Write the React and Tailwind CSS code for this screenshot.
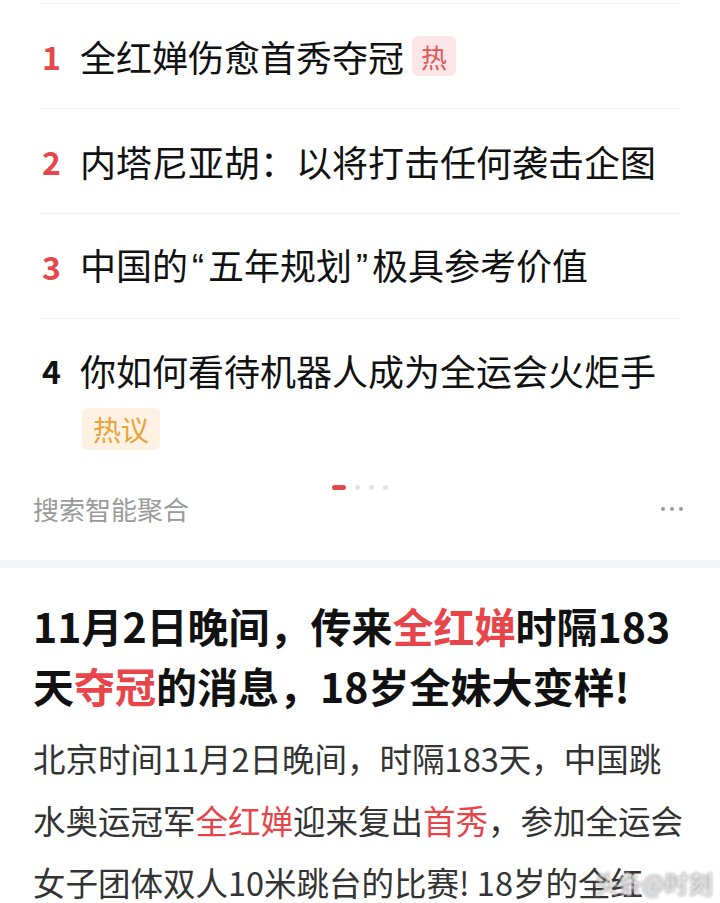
import React from "react";

const F = { fontFamily: '"Noto Sans CJK SC", "Noto Sans", sans-serif' };

function Row({ num, red, children, tag }) {
  return (
    <div className="flex h-[105px] items-center border-b border-[#f0f0f0]">
      <span className={`w-[40px] pl-[2px] text-[32px] font-semibold leading-none ${red ? "text-[#e5474a]" : "text-[#111]"}`}>{num}</span>
      <span className="text-[36px] leading-[50px] text-[#111] whitespace-nowrap">{children}</span>
      {tag}
    </div>
  );
}

const Q = ({ children }) => (
  <span className="mx-[4px]" style={{ fontFamily: '"Liberation Sans", sans-serif' }}>
    {children}
  </span>
);

export default function App() {
  return (
    <div className="relative w-[720px] h-[903px] overflow-hidden bg-white" style={F}>
      <div className="px-[40px]">
        <div className="h-[3px]" />
        <div className="h-px bg-[#f0f0f0]" />
        <Row
          num="1"
          red
          tag={
            <span className="ml-[8px] flex h-[40px] w-[44px] items-center justify-center rounded-[6px] bg-[#fbe5e6] text-[26px] text-[#e0575a]">
              热
            </span>
          }
        >
          全红婵伤愈首秀夺冠
        </Row>
        <Row num="2" red>
          内塔尼亚胡：以将打击任何袭击企图
        </Row>
        <Row num="3" red>
          中国的<Q>“</Q>五年规划<Q>”</Q>极具参考价值
        </Row>
        <div className="pt-[26px]">
          <div className="flex h-[50px] items-center">
            <span className="w-[40px] pl-[2px] text-[32px] font-semibold leading-none text-[#111]">4</span>
            <span className="text-[36px] leading-[50px] text-[#111] whitespace-nowrap">你如何看待机器人成为全运会火炬手</span>
          </div>
          <div className="ml-[42px] mt-[13px] flex h-[42px] w-[78px] items-center justify-center rounded-[6px] bg-[#fdf1e2] text-[28px] text-[#e9a23b]">
            热议
          </div>
        </div>
      </div>

      <div className="mt-[35px] flex items-center justify-center gap-[9px]">
        <span className="h-[5px] w-[14px] rounded-full bg-[#e5474a]" />
        <span className="h-[5px] w-[5px] rounded-full bg-[#e2e2e2]" />
        <span className="h-[5px] w-[5px] rounded-full bg-[#e2e2e2]" />
        <span className="h-[5px] w-[5px] rounded-full bg-[#e2e2e2]" />
      </div>

      <div className="flex h-[38px] items-center justify-between pl-[33px] pr-[37px]">
        <span className="text-[26px] leading-none text-[#9a9a9a]">搜索智能聚合</span>
        <span className="flex gap-[5px]">
          <span className="h-[4px] w-[4px] rounded-full bg-[#9a9a9a]" />
          <span className="h-[4px] w-[4px] rounded-full bg-[#9a9a9a]" />
          <span className="h-[4px] w-[4px] rounded-full bg-[#9a9a9a]" />
        </span>
      </div>

      <div className="mt-[32px] h-[8px] bg-[#f4f5f7]" />

      <div className="px-[33px] pt-[27px]">
        <div className="text-[41px] font-semibold leading-[60px] text-[#111] whitespace-nowrap">
          11月2日晚间，传来<span className="text-[#e8454a]">全红婵</span>时隔183
        </div>
        <div className="text-[41px] font-semibold leading-[60px] text-[#111] whitespace-nowrap">
          天<span className="text-[#e8454a]">夺冠</span>的消息，18岁全妹大变样!
        </div>
        <div className="mt-[12px] text-[32.5px] leading-[62px] text-[#333] whitespace-nowrap">
          <div>北京时间11月2日晚间，时隔183天，中国跳</div>
          <div>
            水奥运冠军<span className="text-[#e8454a]">全红婵</span>迎来复出<span className="text-[#e8454a]">首秀</span>，参加全运会
          </div>
          <div>女子团体双人10米跳台的比赛! 18岁的全红</div>
        </div>
      </div>

      <div className="absolute left-[594px] top-[871px] text-[24px] leading-none text-white blur-[1px] [text-shadow:0_0_2px_#555,0_0_2px_#555]">
        头条@时刻
      </div>
    </div>
  );
}
